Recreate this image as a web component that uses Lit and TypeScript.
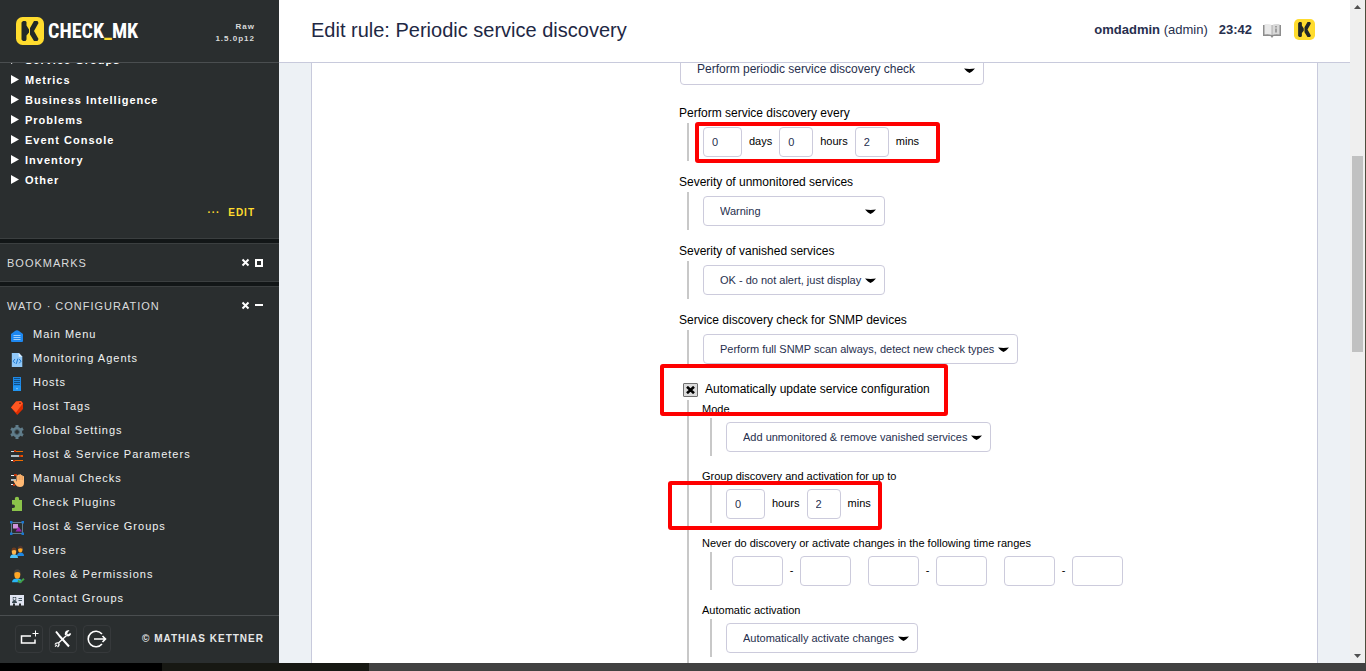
import { LitElement, html, css, svg, nothing } from "lit";
import { customElement, property } from "lit/decorators.js";

const icons: Record<string, unknown> = {
  menu: svg`<path fill="#1e88f0" d="M2 6 6 3Q8 1.600 10 3L14 6V13Q14 14 13 14H3Q2 14 2 13Z"/><path stroke="#9fd0fb" d="M4.500 7.500h7M4.500 9.500h7M4.500 11.500h7" stroke-width="1"/>`,
  agent: svg`<path fill="#90c8f8" d="M2.800 1H10l3.300 3.500V15H2.800Z"/><path fill="#e3f2fd" d="M9.700 1 13.300 4.800H9.700Z"/><path fill="none" stroke="#1976d2" d="M6 7 4.200 9.200 6 11.300M10.200 7 12 9.200l-1.800 2.100M8.900 6.600 7.300 11.800"/>`,
  host: svg`<path fill="#1e88e5" d="M4 1h8v14H4Z"/><path stroke="#114f84" d="M5 2.500h6M5 4.500h6M5 6.500h6M5 8.500h6"/><path fill="#2196f3" d="M4 10h8v5H4Z"/><path fill="#bbdefb" d="M7.500 12h1v1.300h-1Z"/>`,
  tag: svg`<path fill="#dd2c00" d="M2 7.500 7 1.500 12 1l2 2v6L8.200 15Z"/><path fill="#ff5722" d="M2 7.500 7 1.500 12 1l1.800 2.500L7 12.500Z"/><circle cx="11" cy="3.300" r=".8" fill="#5d1a10"/>`,
  gear: svg`<circle cx="8" cy="8" r="3.700" fill="none" stroke="#607d8b" stroke-width="3"/><path stroke="#607d8b" stroke-width="3" d="M8 1v2.500M8 12.500V15M2 4.600l2 1.100M12 10.300l2 1.100M2 11.400l2-1.100M12 5.700l2-1.100"/><circle cx="8" cy="8" r="2.400" fill="none" stroke="#455a64"/>`,
  params: svg`<path stroke="#cfd8dc" stroke-width="1" d="M2 3.500h4"/><path stroke="#b0bec5" stroke-width="2" d="M2 8h9"/><path stroke="#fff" stroke-width="1" d="M2 12.500h3"/><path stroke="#ef6c00" stroke-width="1" d="M6 3.500h8M6 12.500h8"/><path stroke="#e65100" stroke-width="2" d="M10 8h4"/><path stroke="#bf360c" stroke-width="2" d="M5 3h2M10 8h2M4 13h2"/>`,
  manual: svg`<path stroke="#eceff1" stroke-width="1" d="M2 3.500h4M2 12.500h3"/><path stroke="#b0bec5" stroke-width="2" d="M2 8h5"/><path stroke="#bf360c" stroke-width="2" d="M5 3h3M4 13h2"/><path fill="#ffb974" d="M7.500 3.500q.7-.7 1.300 0v-.6q.8-1 1.500 0v-.4q1-.8 1.600 0v.8q1-.8 1.600 0v.9q.8-.6 1.500 0V11q0 4-4 4-3 0-4.300-2L4.300 8.700q.6-1.300 1.800-.4L7.500 9.500Z"/><path stroke="#d88a4b" stroke-width=".5" d="M9 4v4M10.500 3.500V8M12 3.500V8M13.500 4.500V8"/>`,
  plugin: svg`<path fill="#8bc34a" d="M3 4h3q-.8-3.300 2-3.300Q10.600 .7 10 4h3v11H3v-3q3 .3 3-1.800Q6 8 3 8.500Z"/>`,
  groups: svg`<path fill="none" stroke="#607d8b" d="M2.500 2.500h11v11h-11Z"/><path fill="#ce93d8" d="M4 4h5v4.500H4Z"/><path fill="#9c27b0" d="m9.500 6.500 3.500 5H6.500Z"/><path fill="#1976d2" d="M1 1h2.500v2.500H1Zm11.500 0H15v2.500h-2.500ZM1 12.500h2.500V15H1Zm11.500 0H15V15h-2.500Z"/>`,
  users: svg`<path fill="#1e88e5" d="M8 12q0-3.500 3.500-3.500T15 12Z"/><ellipse cx="11.300" cy="5.500" rx="2.200" ry="3" fill="#ffa726"/><path fill="#4e342e" d="M9 5q-.2-3.200 2.300-3.200T13.600 5q-2-1.500-4.600 0Z"/><path fill="#4fc3f7" d="M1 14q0-3.800 4-3.800T9 14Z"/><ellipse cx="5" cy="7.500" rx="2.200" ry="3.200" fill="#ffb74d"/><path fill="#6d3b1f" d="M2.700 6.700Q2.500 3.500 5 3.500t2.300 3.200q-2-1.500-4.600 0Z"/>`,
  roles: svg`<path fill="#29b6f6" d="M3 14.300Q3 10.500 8 10.500t5 3.800Z"/><ellipse cx="8.300" cy="6.600" rx="3" ry="4.200" fill="#ffa726"/><path fill="#424242" d="M5.200 5Q5 1.300 8.300 1.300T11.400 5Q8.500 3 5.200 5Z"/><path fill="none" stroke="#43a047" stroke-width="2" d="m9 12.500 2 1.700 4-3.500"/>`,
  contact: svg`<path fill="#dfe3f0" d="M1 3h14v10.500h-3V11.500h-2v2H6v-2H4v2H1Z"/><path fill="#37474f" d="M3.800 5h3.400v3.500H3.800ZM3 11q0-2.500 2.500-2.500T8 11Z"/><circle cx="5.500" cy="6.700" r="1.200" fill="#dfe3f0"/><path stroke="#455a64" d="M9.500 6.500H13M9.500 8.500H13"/>`,
};

const logo = (size: number) => html`<svg class="logo" width=${size} height=${size} viewBox="0 0 28 28" aria-hidden="true">
  <rect width="28" height="28" rx="6.500" fill="#ffdc2e"/>
  <path fill="#222828" d="M5.500 5.500 7 4H9.500L10.500 5V8.500L13 12.500V15.500L10.500 18.500V22.500L9.500 24H7L5.500 22.500ZM14 11 18 4H21.500L22.500 6 18 14 22.500 22 21.500 24H18L14 17.500Z"/>
</svg>`;

@customElement("value-select")
class ValueSelect extends LitElement {
  @property() label = "";
  @property({ type: Array }) options: string[] = [];
  @property({ type: Boolean, reflect: true }) large = false;

  static styles = css`
    :host { display: inline-grid; font: 11px "Liberation Sans", Arial, sans-serif; }
    :host([large]) { font-size: 12px; }
    select, svg { grid-area: 1 / 1; }
    select {
      appearance: none; box-sizing: border-box; height: 30px; margin: 0;
      padding: 0 22px 0 16px; border: 1px solid #cccbdc; border-radius: 4px;
      background: #fff; color: #272f4e; font: inherit;
    }
    :host([large]) select { padding: 0 30px 2px 16px; }
    svg { align-self: center; justify-self: end; margin-right: 9px; pointer-events: none; }
  `;

  render() {
    return html`<select aria-label=${this.label}>${this.options.map((o) => html`<option>${o}</option>`)}</select>
      <svg width="11" height="5" viewBox="0 0 11 5"><path d="M0 .5Q5.500 1.300 11 .5L8 3.500 5.500 5 3 3.500Z"/></svg>`;
  }
}

@customElement("side-bar")
class SideBar extends LitElement {
  views = ["Service Groups", "Metrics", "Business Intelligence", "Problems", "Event Console", "Inventory", "Other"];
  wato: [string, string][] = [
    ["menu", "Main Menu"], ["agent", "Monitoring Agents"], ["host", "Hosts"], ["tag", "Host Tags"],
    ["gear", "Global Settings"], ["params", "Host & Service Parameters"], ["manual", "Manual Checks"],
    ["plugin", "Check Plugins"], ["groups", "Host & Service Groups"], ["users", "Users"],
    ["roles", "Roles & Permissions"], ["contact", "Contact Groups"],
  ];

  static styles = css`
    :host {
      display: flex; flex-direction: column; min-height: 0; background: #2a2e2f; color: #fff;
      font: 11px/20px "Liberation Sans", Arial, sans-serif; letter-spacing: 1px;
    }
    a { color: inherit; text-decoration: none; }
    ul { list-style: none; margin: 0; padding: 0; }
    button { padding: 0; border: 0; background: none; color: inherit; font: inherit; letter-spacing: inherit; }
    header {
      display: flex; align-items: center; flex: none; height: 62px; padding: 0 24px 0 16px;
      border-bottom: 1px solid #4a4e50;
    }
    .logo { flex: none; }
    .brand {
      flex: 1; padding-left: 4px; letter-spacing: 0;
      font: bold 20px/28px "Liberation Sans Narrow", "Roboto Condensed", "Liberation Sans", sans-serif;
    }
    .brand i { color: #ffdc2e; font-style: normal; }
    .version { font-size: 8px; line-height: 12px; font-weight: bold; text-align: right; color: #d8dada; padding-top: 3px; }
    .scroll { display: flex; flex-direction: column; flex: 1; min-height: 0; overflow: hidden; background: #121617; }
    section { flex: none; background: #2a2e2f; border-bottom: 1px solid #3b3f40; }
    section + section { margin-top: 4px; border-top: 1px solid #3b3f40; }
    .views { margin-top: -13px; padding-bottom: 15px; }
    .views li { display: flex; align-items: center; gap: 6px; padding-left: 11px; font-weight: bold; }
    .views svg { margin-bottom: 1px; }
    .edit { display: block; margin-top: 13px; padding-right: 24px; text-align: right; font-size: 10px; font-weight: bold; color: #ffdc2e; }
    .edit span { margin-right: 4px; }
    .title { display: flex; align-items: center; box-sizing: border-box; height: 37px; padding: 1px 16px 0 7px; color: #dadcdd; }
    .title h2 { flex: 1; margin: 0; font: inherit; }
    .title button { display: flex; margin-left: 5px; margin-bottom: 1px; }
    .wato { flex: 1 0 auto; border-bottom: 0; }
    .wato .title { height: 35px; padding-top: 3px; }
    .wato li { display: flex; align-items: flex-start; gap: 8px; height: 24px; padding-left: 9px; }
    .wato li svg { margin-top: 6px; }
    .wato a { line-height: 24px; color: #f0f2f2; }
    footer {
      display: flex; align-items: center; gap: 6px; flex: none; box-sizing: border-box; height: 48px;
      padding: 0 15px 2px; border-top: 1px solid #4a4e50; background: #2a2e2f;
    }
    footer button { display: grid; place-items: center; box-sizing: border-box; width: 28px; height: 28px; border: 1px solid #36393b; border-radius: 4px; }
    footer a { margin-left: auto; font-size: 10px; font-weight: bold; color: #e6e8e8; }
  `;

  private close = () => html`<button aria-label="Close"><svg width="9" height="9" viewBox="0 0 9 9" stroke="#fff" stroke-width="2"><path d="M1.500 1.500l6 6M7.500 1.500l-6 6"/></svg></button>`;

  render() {
    return html`
      <header>
        ${logo(28)}
        <div class="brand">CHECK<i>_</i>MK</div>
        <div class="version">Raw<br>1.5.0p12</div>
      </header>
      <div class="scroll">
        <section class="views">
          <ul>${this.views.map((v) => html`<li><svg width="8" height="9" viewBox="0 0 8 9"><path fill="#fff" d="M0 0 8 4.500 0 9Z"/></svg><a href="#">${v}</a></li>`)}</ul>
          <a class="edit" href="#"><span>···</span> EDIT</a>
        </section>
        <section>
          <div class="title"><h2>BOOKMARKS</h2>${this.close()}
            <button aria-label="Expand"><svg width="8" height="8" viewBox="0 0 8 8"><path fill="none" stroke="#fff" stroke-width="2" d="M1 1h6v6H1Z"/></svg></button></div>
        </section>
        <section class="wato">
          <div class="title"><h2>WATO · CONFIGURATION</h2>${this.close()}
            <button aria-label="Collapse"><svg width="8" height="8" viewBox="0 0 8 8"><path fill="#fff" d="M0 2h8v2H0Z"/></svg></button></div>
          <ul>${this.wato.map(([i, t]) => html`<li><svg width="16" height="16" viewBox="0 0 16 16">${icons[i]}</svg><a href="#">${t}</a></li>`)}</ul>
        </section>
      </div>
      <footer>
        <button aria-label="Add snapin"><svg width="20" height="18" viewBox="0 0 20 18" fill="none" stroke="#fff"><path stroke-width="1.500" d="M12 6H2.500v7H16V9.500"/><path d="M13.500 3.500h6M16.500 .5v6"/></svg></button>
        <button aria-label="Settings"><svg width="18" height="18" viewBox="0 0 18 18" fill="none" stroke="#fff"><path stroke-width="2" d="m2 1.500 4 5 9 10"/><path stroke-width="1.300" d="M4.500 13 12.500 5.500M16.500 3.500l-2 1.500-1.500-.5-.5-1.500 1.500-2Q11 1.500 11.500 5M16.500 3.500Q16 6.500 12.500 5.500M1 16.500l2-1.500M4.500 13Q2 12.500 1 14.500M4.500 13Q6 15 3.500 17"/></svg></button>
        <button aria-label="Log out"><svg width="20" height="18" viewBox="0 0 20 18" fill="none" stroke="#fff" stroke-width="1.600"><path d="M15 4A7.800 7.800 0 1 0 15 14"/><path d="M7 9h11M15.500 6l3 3-3 3"/></svg></button>
        <a href="#">© MATHIAS KETTNER</a>
      </footer>`;
  }
}

@customElement("app-root")
class AppRoot extends LitElement {
  static styles = css`
    :host {
      display: grid; grid-template: minmax(0, 1fr) 8px / 279px minmax(0, 1fr) 16px; height: 100vh;
      box-sizing: border-box; font: 12px/14px "Liberation Sans", Arial, sans-serif; color: #000; background: #fff;
    }
    main { display: flex; flex-direction: column; min-width: 0; min-height: 0; }
    .top {
      display: flex; align-items: center; flex: none; height: 62px; padding: 0 35px 0 32px;
      border-bottom: 1px solid #c8cadc; color: #272f4e; font-size: 13px;
    }
    h1 { flex: 1; margin: 0; font-size: 20px; line-height: 24px; font-weight: normal; padding-bottom: 2px; color: #1e2844; }
    .user { padding-bottom: 2px; }
    .clock { margin: 0 11px; padding-bottom: 2px; }
    .book { margin-right: 13px; }
    .top .logo { margin-bottom: 3px; }
    .page { flex: 1; min-height: 0; overflow: hidden; padding: 0 32px; background: #edf1f5; }
    .panel { display: grid; grid-template-columns: 367px minmax(0, 1fr); min-height: 100%; background: #fff; border: solid #c8cadc; border-width: 0 1px; }
    .rule { grid-column: 2; margin-top: -8px; position: relative; }
    .choice { display: block; height: 51px; padding-left: 1px; }
    .item { margin-bottom: 14px; }
    .name { display: block; padding-bottom: 3px; color: #000; }
    .body {
      position: relative; display: flex; align-items: center; gap: 7px; height: 38px; margin-left: 8px; padding-left: 14px;
      border-left: 2px solid #c8c8c8; font-size: 11px; line-height: 12px;
    }
    .body span { padding-bottom: 2px; }
    .ranges { gap: 0; padding-left: 20px; }
    .sub { margin: 4px 0 0 8px; padding: 3px 0 60px 13px; border-left: 2px solid #c8c8c8; font-size: 11px; line-height: 12px; }
    input[type="text"] {
      box-sizing: border-box; width: 34px; height: 30px; margin: 0; padding: 0 8px; border: 1px solid #cccbdc; border-radius: 4px;
      background: #fff; font: 11px "Liberation Sans", Arial, sans-serif; color: #272f4e;
    }
    input[type="text"].wide { width: 39px; }
    input[type="text"].time { width: 51px; }
    .dash { width: 17px; text-align: center; }
    .group { position: relative; }
    .check { display: flex; align-items: center; gap: 7px; height: 14px; padding-left: 4px; }
    .box { display: grid; margin-top: 2px; }
    .box input {
      appearance: none; box-sizing: border-box; width: 15px; height: 14px; margin: 0;
      border: 1px solid #707070; border-radius: 1px; background: #dcdcdc;
    }
    .box input, .box svg { grid-area: 1 / 1; }
    .box svg { place-self: center; pointer-events: none; }
    .mark { position: absolute; box-sizing: border-box; border: 4px solid #fe0000; border-radius: 3px; pointer-events: none; z-index: 1; }
    .mark-every { left: 6px; top: -1px; width: 245px; height: 41px; }
    .mark-auto { left: -19px; top: -18px; width: 288px; height: 52px; }
    .mark-limit { left: -44px; top: -4px; width: 214px; height: 49px; }
    .bar { display: flex; flex-direction: column; align-items: center; background: #efefef; border-right: 1px solid #4d4d3c; }
    .bar svg { margin: 5px 0; }
    .track { flex: 1; width: 11px; display: grid; grid-template-rows: 22% 31% 1fr; padding-top: 3px; }
    .thumb { grid-row: 2; background: #c1c1c1; }
    .dock { grid-column: 1 / -1; background: linear-gradient(90deg, #000 0 162px, #171813 162px 369px, #414141 369px); }
  `;

  private text(label: string, value = "", cls = "") {
    return html`<input type="text" class=${cls || nothing} aria-label=${label} .value=${value}>`;
  }

  private select(label: string, options: string[], large = false) {
    return html`<value-select .label=${label} .options=${options} ?large=${large}></value-select>`;
  }

  private item(name: string, body: unknown, cls = "") {
    return html`<div class="item"><span class="name">${name}</span><div class="body ${cls}">${body}</div></div>`;
  }

  render() {
    const severity = (first: string) => [first, "OK - do not alert, just display", "Warning", "Critical"].filter((o, i, a) => a.indexOf(o) === i);
    return html`
      <side-bar></side-bar>
      <main>
        <div class="top">
          <h1>Edit rule: Periodic service discovery</h1>
          <span class="user"><b>omdadmin</b> (admin)</span>
          <b class="clock">23:42</b>
          <svg class="book" width="18" height="14" viewBox="0 0 18 14"><path fill="#8d8d8d" d="M0 1h18v11h-7.500L9 14l-1.500-2H0Z"/><path fill="#e9e9e9" d="M1.500 0Q6-.3 8.700 1v10Q6 10 1.500 10.500Z"/><path fill="#d9d9d9" d="M9.300 1Q12-.3 16.500 0v10.500Q12 10 9.300 11Z"/><path stroke="#8a8a8a" stroke-width="1.500" d="M13 2v1.500M13 4.500v4"/></svg>
          ${logo(21)}
        </div>
        <div class="page">
          <div class="panel">
            <div class="rule">
              <div class="choice">${this.select("Discovery", ["Perform periodic service discovery check", "Do not perform periodic service discovery check"], true)}</div>
              ${this.item("Perform service discovery every", html`
                ${this.text("days", "0", "wide")}<span>days</span>
                ${this.text("hours", "0")}<span>hours</span>
                ${this.text("mins", "2")}<span>mins</span>
                <div class="mark mark-every"></div>`)}
              ${this.item("Severity of unmonitored services", this.select("Severity of unmonitored services", severity("Warning")))}
              ${this.item("Severity of vanished services", this.select("Severity of vanished services", severity("OK - do not alert, just display")))}
              ${this.item("Service discovery check for SNMP devices", this.select("Service discovery check for SNMP devices", ["Perform full SNMP scan always, detect new check types"]))}
              <div class="group">
                <label class="check"><span class="box"><input type="checkbox" checked><svg width="9" height="8" viewBox="0 0 9 8"><path stroke="#000" stroke-width="2.600" d="M1 .8l7 6.400M8 .8 1 7.200"/></svg></span>Automatically update service configuration</label>
                <div class="sub">
                  ${this.item("Mode", this.select("Mode", ["Add unmonitored & remove vanished services"]))}
                  ${this.item("Group discovery and activation for up to", html`
                    ${this.text("hours", "0", "wide")}<span>hours</span>
                    ${this.text("mins", "2")}<span>mins</span>
                    <div class="mark mark-limit"></div>`)}
                  ${this.item("Never do discovery or activate changes in the following time ranges",
                    [0, 1, 2].map((n) => html`${n ? html`<span class="dash"></span>` : nothing}${this.text("from", "", "time")}<span class="dash">-</span>${this.text("until", "", "time")}`), "ranges")}
                  ${this.item("Automatic activation", this.select("Automatic activation", ["Automatically activate changes"]))}
                </div>
                <div class="mark mark-auto"></div>
              </div>
            </div>
          </div>
        </div>
      </main>
      <div class="bar" aria-hidden="true">
        <svg width="7" height="4" viewBox="0 0 7 4"><path fill="#505050" d="M3.500 0 7 4H0Z"/></svg>
        <div class="track"><div class="thumb"></div></div>
        <svg width="7" height="4" viewBox="0 0 7 4"><path fill="#505050" d="M0 0h7L3.500 4Z"/></svg>
      </div>
      <div class="dock"></div>`;
  }
}
